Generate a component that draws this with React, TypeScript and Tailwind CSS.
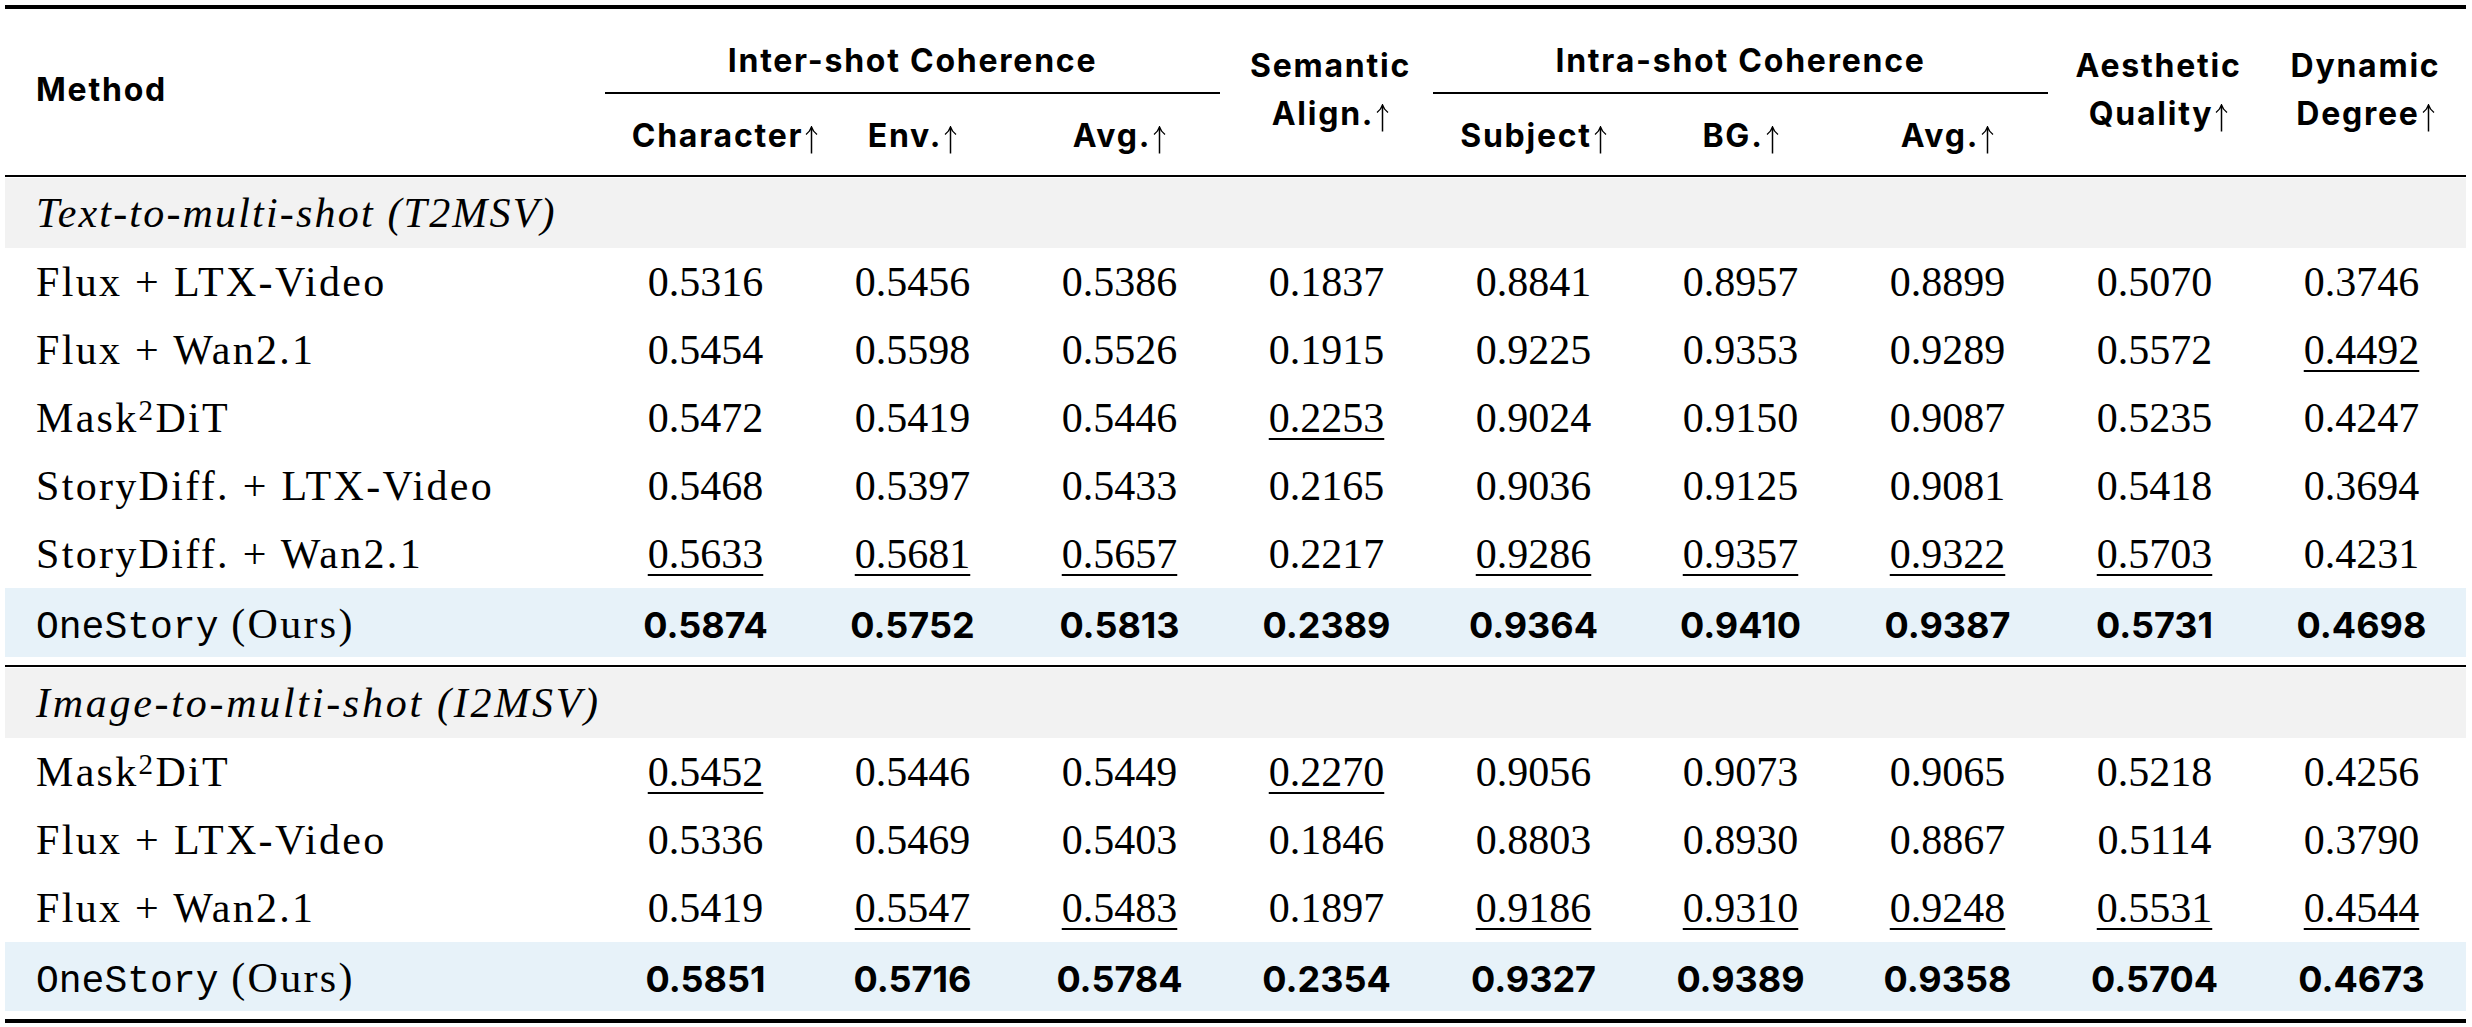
import React from "react"

const COLS = "grid grid-cols-[597px_repeat(9,207px)]"

type Row = { label: React.ReactNode; values: string[]; ours?: boolean }

const Mask2DiT = (
  <>
    Mask<sup className="text-[29px] top-[-0.42em]">2</sup>DiT
  </>
)

const Ours = (
  <>
    <span className="font-['Liberation_Mono',monospace] text-[38px] tracking-normal">OneStory</span> (Ours)
  </>
)

const t2msv: Row[] = [
  { label: "Flux + LTX-Video", values: ["0.5316", "0.5456", "0.5386", "0.1837", "0.8841", "0.8957", "0.8899", "0.5070", "0.3746"] },
  { label: "Flux + Wan2.1", values: ["0.5454", "0.5598", "0.5526", "0.1915", "0.9225", "0.9353", "0.9289", "0.5572", "_0.4492"] },
  { label: Mask2DiT, values: ["0.5472", "0.5419", "0.5446", "_0.2253", "0.9024", "0.9150", "0.9087", "0.5235", "0.4247"] },
  { label: "StoryDiff. + LTX-Video", values: ["0.5468", "0.5397", "0.5433", "0.2165", "0.9036", "0.9125", "0.9081", "0.5418", "0.3694"] },
  { label: "StoryDiff. + Wan2.1", values: ["_0.5633", "_0.5681", "_0.5657", "0.2217", "_0.9286", "_0.9357", "_0.9322", "_0.5703", "0.4231"] },
  { label: Ours, ours: true, values: ["0.5874", "0.5752", "0.5813", "0.2389", "0.9364", "0.9410", "0.9387", "0.5731", "0.4698"] },
]

const i2msv: Row[] = [
  { label: Mask2DiT, values: ["_0.5452", "0.5446", "0.5449", "_0.2270", "0.9056", "0.9073", "0.9065", "0.5218", "0.4256"] },
  { label: "Flux + LTX-Video", values: ["0.5336", "0.5469", "0.5403", "0.1846", "0.8803", "0.8930", "0.8867", "0.5114", "0.3790"] },
  { label: "Flux + Wan2.1", values: ["0.5419", "_0.5547", "_0.5483", "0.1897", "_0.9186", "_0.9310", "_0.9248", "_0.5531", "_0.4544"] },
  { label: Ours, ours: true, values: ["0.5851", "0.5716", "0.5784", "0.2354", "0.9327", "0.9389", "0.9358", "0.5704", "0.4673"] },
]

// thin math-style up arrow, sits a little below the baseline like \uparrow
function Up() {
  return (
    <svg width="13" height="28" viewBox="0 0 13 28" className="inline-block shrink-0 ml-[2px] relative top-[4px]">
      <path d="M6.5 27.5V1.5" stroke="black" strokeWidth="1.5" fill="none" />
      <path d="M1 8.5C3.6 6.5 5.6 4 6.5 1C7.4 4 9.4 6.5 12 8.5" stroke="black" strokeWidth="1.4" fill="none" />
    </svg>
  )
}

function Cell({ v, ours }: { v: string; ours?: boolean }) {
  if (ours) {
    return <div className="text-center font-['Inter',sans-serif] font-bold text-[36px] leading-none">{v}</div>
  }
  const under = v.startsWith("_")
  const text = under ? v.slice(1) : v
  return (
    <div className="text-center text-[42px] leading-none">
      <span className={under ? "underline decoration-[1.5px] underline-offset-[6px]" : ""}>{text}</span>
    </div>
  )
}

function DataRow({ row }: { row: Row }) {
  return (
    <div className={`${COLS} items-center ${row.ours ? "h-[69px] bg-[#e7f2f9] pt-[4px]" : "h-[68px]"}`}>
      <div className="pl-[31px] text-[42px] leading-none tracking-[0.055em] whitespace-nowrap">{row.label}</div>
      {row.values.map((v, i) => (
        <Cell key={i} v={v} ours={row.ours} />
      ))}
    </div>
  )
}

function Section({ title, rows, tight }: { title: string; rows: Row[]; tight?: boolean }) {
  return (
    <>
      <div
        className={`h-[70px] bg-[#f2f2f2] flex items-center pl-[31px] text-[42px] italic leading-none ${
          tight ? "tracking-[0.052em]" : "tracking-[0.065em]"
        }`}
      >
        {title}
      </div>
      {rows.map((r, i) => (
        <DataRow key={i} row={r} />
      ))}
    </>
  )
}

export default function App() {
  return (
    <div className="w-[2472px] h-[1027px] bg-white pl-[5px] pt-[5px] text-black font-['Liberation_Serif',serif]">
      <div className="w-[2461px]">
        <div className="h-[4px] bg-black" />

        {/* Header */}
        <div className={`${COLS} grid-rows-[83px_2px_81px] font-['Inter',sans-serif] font-bold text-[32px] tracking-[0.055em] leading-[36px]`}>
          <div className="col-start-1 row-start-1 row-span-3 flex items-center pl-[31px] pb-[4px]">Method</div>

          <div className="col-start-2 col-span-3 row-start-1 flex items-end justify-center pb-[13px]">Inter-shot Coherence</div>
          <div className="col-start-2 col-span-3 row-start-2 mx-[3px] bg-black" />
          <div className="col-start-2 row-start-3 flex items-center justify-center pl-[39px] pt-[3px]">
            Character<Up />
          </div>
          <div className="col-start-3 row-start-3 flex items-center justify-center pt-[3px]">
            Env.<Up />
          </div>
          <div className="col-start-4 row-start-3 flex items-center justify-center pt-[3px]">
            Avg.<Up />
          </div>

          <div className="col-start-5 row-start-1 row-span-3 flex flex-col items-center justify-center leading-[48px] pb-[4px] pl-[8px]">
            <span>Semantic</span>
            <span className="flex items-center">
              Align.<Up />
            </span>
          </div>

          <div className="col-start-6 col-span-3 row-start-1 flex items-end justify-center pb-[13px]">Intra-shot Coherence</div>
          <div className="col-start-6 col-span-3 row-start-2 mx-[3px] bg-black" />
          <div className="col-start-6 row-start-3 flex items-center justify-center pt-[3px]">
            Subject<Up />
          </div>
          <div className="col-start-7 row-start-3 flex items-center justify-center pt-[3px]">
            BG.<Up />
          </div>
          <div className="col-start-8 row-start-3 flex items-center justify-center pt-[3px]">
            Avg.<Up />
          </div>

          <div className="col-start-9 row-start-1 row-span-3 flex flex-col items-center justify-center leading-[48px] pb-[4px] pl-[8px]">
            <span>Aesthetic</span>
            <span className="flex items-center">
              Quality<Up />
            </span>
          </div>
          <div className="col-start-10 row-start-1 row-span-3 flex flex-col items-center justify-center leading-[48px] pb-[4px] pl-[8px]">
            <span>Dynamic</span>
            <span className="flex items-center">
              Degree<Up />
            </span>
          </div>
        </div>

        <div className="h-[2px] bg-black" />
        <div className="h-[1px]" />
        <Section title="Text-to-multi-shot (T2MSV)" rows={t2msv} tight />
        <div className="h-[8px]" />
        <div className="h-[2px] bg-black" />
        <div className="h-[1px]" />
        <Section title="Image-to-multi-shot (I2MSV)" rows={i2msv} />
        <div className="h-[8px]" />
        <div className="h-[4px] bg-black" />
      </div>
    </div>
  )
}
